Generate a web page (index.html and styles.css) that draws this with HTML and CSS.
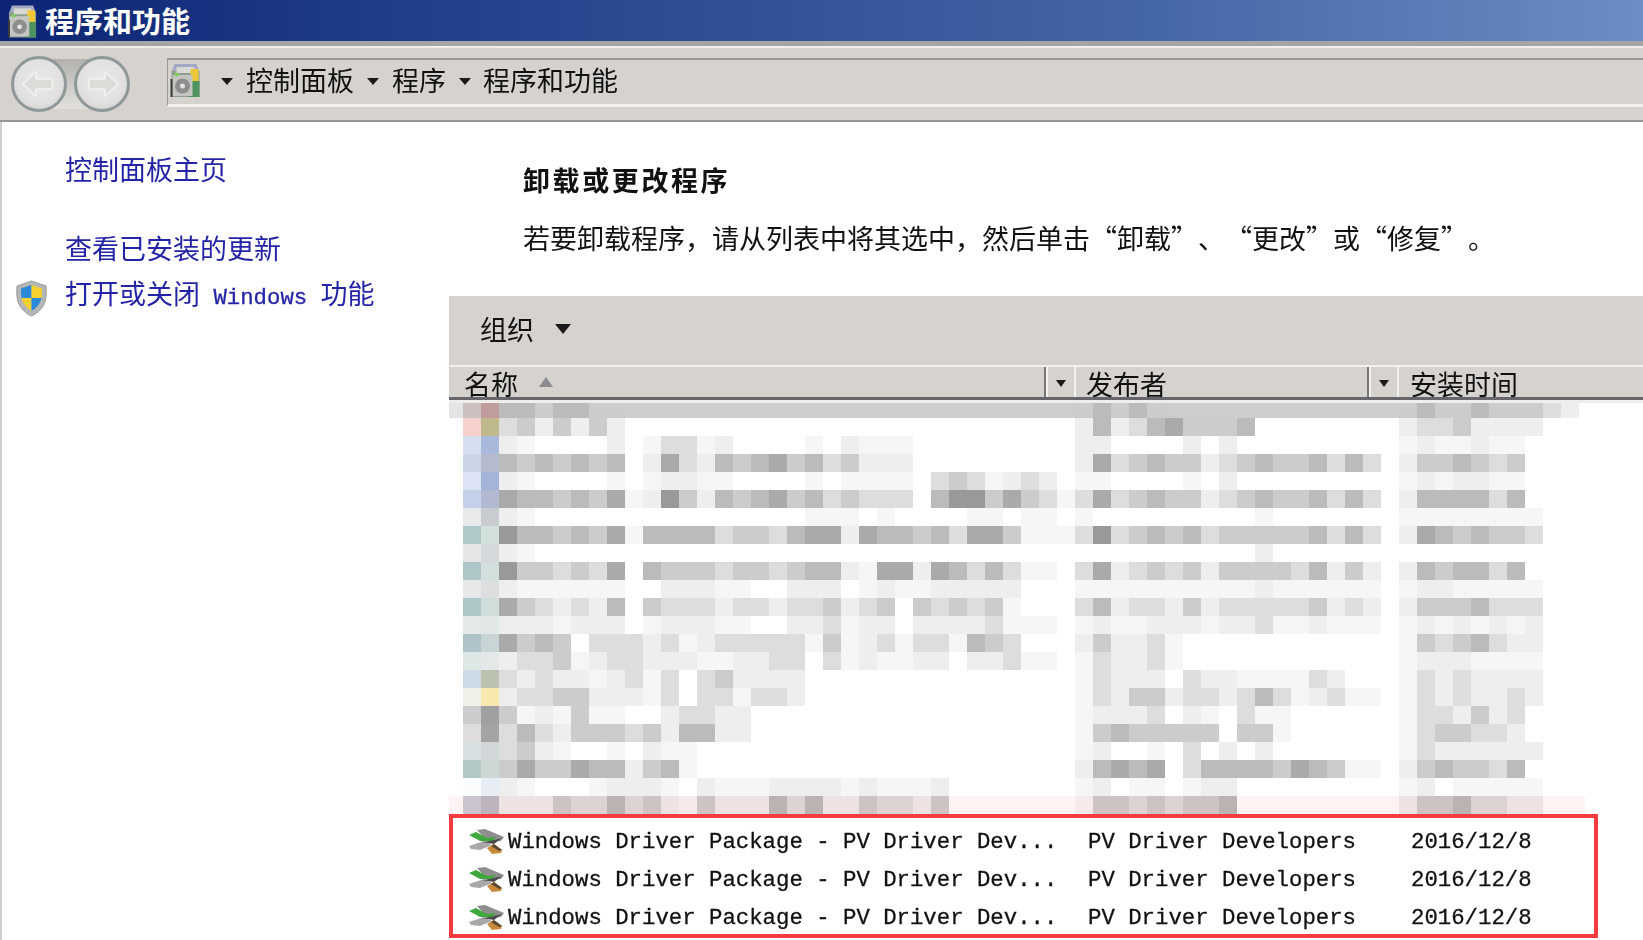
FILE: index.html
```html
<!DOCTYPE html>
<html lang="zh-CN">
<head>
    <meta charset="UTF-8">
    <title>程序和功能</title>
    <link rel="stylesheet" href="styles.css">
</head>
<body>
    <svg class="icon-defs" width="0" height="0">
        <symbol id="programs-icon" viewBox="0 0 32 36">
            <path d="M5 2h22l3 8H2z" fill="#a4a8c4"/>
            <rect x="2" y="9" width="28" height="26" fill="#8f9c90"/>
            <rect x="7" y="5" width="18" height="6" fill="#d8d8d4"/>
            <path d="M21 7h8v12h-8z" fill="#efc636"/>
            <rect x="19" y="19" width="11" height="16" fill="#4f9460"/>
            <rect x="3" y="13" width="20" height="21" fill="#c4c4c0"/>
            <circle cx="13" cy="24" r="7.500" fill="#8e8e8e"/>
            <circle cx="13" cy="24" r="2.500" fill="#e4e4e4"/>
            <rect x="1" y="17" width="2" height="18" fill="#3a3a3a"/>
            <rect x="5" y="11" width="4" height="3" fill="#7ed05a"/>
        </symbol>
        <symbol id="driver-icon" viewBox="0 0 36 26">
            <path d="M9 2l8-1 19 8-3 4-13 1z" fill="#8e8e8e"/>
            <path d="M1 7l7-3 11 6 9-1-4 4-12 0z" fill="#3fa83c"/>
            <path d="M1 18l15-5 8 4-12 5-9-1z" fill="#a8a8a8"/>
            <path d="M14 14l8-1 12-3-8 6z" fill="#4a4a4a"/>
            <path d="M19 20l7-4 8 6-1 3-9 1z" fill="#c98a3c"/>
            <path d="M26 16l8 6-3 1-8-5z" fill="#5c4a34"/>
        </symbol>
    </svg>

    <div class="window">
        <div class="titlebar">
            <svg class="window-icon"><use href="#programs-icon"/></svg>
            <span class="title">程序和功能</span>
        </div>

        <div class="toolbar">
            <svg class="nav-buttons" viewBox="0 0 120 56">
                <defs>
                    <radialGradient id="nav-fill" cx="50%" cy="45%" r="60%">
                        <stop offset="0%" stop-color="#ebeae8"/>
                        <stop offset="70%" stop-color="#e2e1df"/>
                        <stop offset="100%" stop-color="#cfcecb"/>
                    </radialGradient>
                    <linearGradient id="nav-bridge" x1="0" y1="0" x2="0" y2="1">
                        <stop offset="0%" stop-color="#b4b2ae"/>
                        <stop offset="100%" stop-color="#e2e1de"/>
                    </linearGradient>
                </defs>
                <rect x="26" y="3" width="68" height="50" fill="url(#nav-bridge)"/>
                <circle cx="28" cy="28" r="26.500" fill="url(#nav-fill)" stroke="#8f9898" stroke-width="3"/>
                <circle cx="91" cy="28" r="26.500" fill="url(#nav-fill)" stroke="#8f9898" stroke-width="3"/>
                <path d="M12 28l13-12v7h16v10H25v7z" fill="#dcdbd8" stroke="#f2f2f0" stroke-width="1.500"/>
                <path d="M107 28L94 16v7H78v10h16v7z" fill="#dcdbd8" stroke="#f2f2f0" stroke-width="1.500"/>
            </svg>
            <div class="breadcrumb">
                <svg class="crumb-icon"><use href="#programs-icon"/></svg>
                <span class="crumb-arrow"></span>
                <span class="crumb">控制面板</span>
                <span class="crumb-arrow"></span>
                <span class="crumb">程序</span>
                <span class="crumb-arrow"></span>
                <span class="crumb">程序和功能</span>
            </div>
        </div>

        <div class="content">
            <div class="sidebar">
                <div class="task task-home">
                    <span class="task-slot"></span>
                    <a class="task-link">控制面板主页</a>
                </div>
                <div class="task task-updates">
                    <span class="task-slot"></span>
                    <a class="task-link">查看已安装的更新</a>
                </div>
                <div class="task">
                    <span class="task-slot">
                        <svg class="shield" viewBox="0 0 33 37">
                            <path d="M16.500 1L31 6c1 12 0 23-14.500 30C2 29 1 18 2 6z" fill="#b4b6b8" stroke="#9a9c9e"/>
                            <path d="M16.500 5L6 8.500c0 3 0 6 .5 9.500h10z" fill="#2a8ad8"/>
                            <path d="M16.500 5L27 8.500c0 3 0 6-.5 9.500h-10z" fill="#f6d02e"/>
                            <path d="M6.500 18c1 5 5 10 10 13V18z" fill="#f6d02e"/>
                            <path d="M26.500 18c-1 5-5 10-10 13V18z" fill="#2a8ad8"/>
                        </svg>
                    </span>
                    <a class="task-link">打开或关闭<span class="latin"> Windows </span>功能</a>
                </div>
            </div>

            <div class="main">
                <h1 class="heading">卸载或更改程序</h1>
                <p class="hint">若要卸载程序，请从列表中将其选中，然后单击“卸载”、“更改”或“修复”。</p>

                <div class="list-toolbar">
                    <span>组织</span>
                    <span class="organize-arrow"></span>
                </div>

                <div class="list-header">
                    <div class="column column-name">
                        <span class="column-title">名称</span>
                        <span class="sort-arrow"></span>
                    </div>
                    <div class="column-menu"><span class="menu-arrow"></span></div>
                    <div class="column column-publisher">
                        <span class="column-title">发布者</span>
                    </div>
                    <div class="column-menu"><span class="menu-arrow"></span></div>
                    <div class="column column-date">
                        <span class="column-title">安装时间</span>
                    </div>
                </div>

                <canvas id="mosaic" class="mosaic" width="1136" height="411"></canvas>

                <div class="drivers">
                    <div class="driver-row">
                        <svg class="driver-icon"><use href="#driver-icon"/></svg>
                        <span class="driver-name">Windows Driver Package - PV Driver Dev...</span>
                        <span class="driver-publisher">PV Driver Developers</span>
                        <span>2016/12/8</span>
                    </div>
                    <div class="driver-row">
                        <svg class="driver-icon"><use href="#driver-icon"/></svg>
                        <span class="driver-name">Windows Driver Package - PV Driver Dev...</span>
                        <span class="driver-publisher">PV Driver Developers</span>
                        <span>2016/12/8</span>
                    </div>
                    <div class="driver-row">
                        <svg class="driver-icon"><use href="#driver-icon"/></svg>
                        <span class="driver-name">Windows Driver Package - PV Driver Dev...</span>
                        <span class="driver-publisher">PV Driver Developers</span>
                        <span>2016/12/8</span>
                    </div>
                </div>
            </div>
        </div>
    </div>

    <script src="mosaic.js"></script>
</body>
</html>
```

FILE: styles.css
```css
* {
    margin: 0;
    padding: 0;
    box-sizing: border-box;
    font-family: "Noto Sans CJK SC", "Liberation Mono", sans-serif;
}

:root {
    --panel-color: #d6d3ce;
    --line-color: #98989a;
    --link-color: #2424a8;
    --text-color: #111111;
}

body {
    background-color: #ffffff;
    color: var(--text-color);
    overflow: hidden;
}

.icon-defs {
    position: absolute;
}

/* the screenshot is an upscaled one, everything in it is a bit soft */
.window {
    width: 1643px;
    height: 940px;
    display: flex;
    flex-direction: column;
    overflow: hidden;
    filter: blur(0.6px);
}

.titlebar {
    height: 41px;
    flex-shrink: 0;
    display: flex;
    align-items: center;
    padding-left: 7px;
    gap: 7px;
    background: linear-gradient(90deg, #0c2473 0%, #1d3a86 20%, #4467a8 70%, #6c8cc4 100%);
}

.window-icon {
    width: 31px;
    height: 36px;
}

.title {
    margin-top: -2px;
    font-size: 29px;
    font-weight: 700;
    line-height: 36px;
    color: #ffffff;
}

.toolbar {
    height: 81px;
    flex-shrink: 0;
    display: flex;
    padding: 12px 0 0 11px;
    background-color: var(--panel-color);
    border-top: 5px solid #a5a5a5;
    border-bottom: 2px solid #96969a;
    box-shadow: inset 0 2px 0 #f0efec;
}

.nav-buttons {
    width: 120px;
    height: 56px;
    margin-top: -2px;
}

.breadcrumb {
    flex: 1;
    height: 49px;
    margin-left: 36px;
    display: flex;
    align-items: center;
    padding: 0 0 5px 1px;
    border-top: 2px solid var(--line-color);
    border-left: 1px solid var(--line-color);
    border-bottom: 3px solid #f1f0ec;
    font-size: 27px;
}

.crumb-icon {
    width: 33px;
    height: 36px;
}

.crumb-arrow {
    width: 0;
    height: 0;
    margin: 4px 13px 0 13px;
    border-left: 6px solid transparent;
    border-right: 6px solid transparent;
    border-top: 7px solid #1a1a1a;
}

.crumb-arrow:nth-child(2) {
    margin-left: 19px;
}

.crumb {
    line-height: 36px;
}

.crumb:last-child {
    margin-left: -1px;
}

.content {
    flex: 1;
    display: flex;
    min-height: 0;
}

.sidebar {
    width: 449px;
    flex-shrink: 0;
    padding: 29px 0 0 13px;
    border-left: 2px solid #cfcfcf;
    display: flex;
    flex-direction: column;
    gap: 11px;
}

.task {
    display: flex;
    align-items: center;
    height: 36px;
    font-size: 27px;
}

.task-updates {
    margin-top: 32px;
}

.task-slot {
    width: 50px;
    flex-shrink: 0;
    display: flex;
}

.shield {
    width: 33px;
    height: 37px;
    margin-top: 6px;
}

.task-link {
    color: var(--link-color);
    line-height: 36px;
    white-space: nowrap;
}

.latin {
    font-family: "Liberation Mono", monospace;
    font-size: 22.34px;
    -webkit-text-stroke: 0.3px;
}

.main {
    flex: 1;
    min-width: 0;
}

.heading {
    margin: 40px 0 0 74px;
    font-size: 27px;
    font-weight: 700;
    line-height: 36px;
    letter-spacing: 2.6px;
}

.hint {
    margin: 22px 0 0 74px;
    font-size: 27px;
    line-height: 36px;
    white-space: nowrap;
    text-spacing-trim: space-all;
}

.list-toolbar {
    height: 69px;
    margin-top: 40px;
    display: flex;
    align-items: center;
    gap: 21px;
    padding: 0 0 4px 31px;
    background-color: var(--panel-color);
    font-size: 27px;
}

.organize-arrow {
    width: 0;
    height: 0;
    border-left: 8px solid transparent;
    border-right: 8px solid transparent;
    border-top: 10px solid #1a1a1a;
}

.list-header {
    height: 35px;
    display: flex;
    overflow: hidden;
    margin-bottom: 3px;
    background-color: var(--panel-color);
    border-top: 2px solid #f2f1ee;
    border-bottom: 3px solid #66666a;
    font-size: 27px;
    box-shadow: 0 3px 0 #eeeeee;
}

.column {
    display: flex;
    height: 30px;
    line-height: 30px;
    border-right: 2px solid #77777a;
}

.column-title {
    margin-top: 2px;
    white-space: nowrap;
}

.column-name {
    width: 597px;
    padding-left: 15px;
}

.column-publisher {
    width: 295px;
    padding-left: 10px;
    border-left: 2px solid #f2f1ee;
}

.column-date {
    flex: 1;
    padding-left: 11px;
    border-left: 2px solid #f2f1ee;
    border-right: none;
}

.sort-arrow {
    width: 0;
    height: 0;
    margin: 10px 0 0 21px;
    border-left: 7px solid transparent;
    border-right: 7px solid transparent;
    border-bottom: 10px solid #8c8c90;
}

.column-menu {
    width: 28px;
    height: 30px;
    display: flex;
    align-items: center;
    justify-content: center;
    padding-top: 3px;
    border-left: 2px solid #f2f1ee;
}

.menu-arrow {
    width: 0;
    height: 0;
    border-left: 5px solid transparent;
    border-right: 5px solid transparent;
    border-top: 7px solid #1a1a1a;
}

.mosaic {
    display: block;
}

.drivers {
    width: 1149px;
    height: 124px;
    padding: 5px 0 0 15px;
    border: 4px solid #f43b40;
    font-family: "Liberation Mono", monospace;
    font-size: 22.34px;
    -webkit-text-stroke: 0.3px;
}

.driver-row {
    height: 38px;
    display: flex;
    align-items: center;
    white-space: nowrap;
}

.driver-row span {
    font-family: "Liberation Mono", monospace;
}

.driver-icon {
    width: 36px;
    height: 26px;
    margin-right: 4px;
    margin-top: -2px;
}

.driver-name {
    width: 580px;
}

.driver-publisher {
    width: 323px;
}
```

FILE: mosaic.js
```js
// pixelated rows of the program list: icon colours, then grey levels per tile.
// sections start at tile 2, 34 and 52, "f" is white and "g" is a very light tile
const TILE = 18;
const LEFT = 14;
const BAND_HEIGHT = 15;
const SECTION_START = [2, 34, 52];

const band = ["#ccc0c0", "#c09c9c", "bbcbbcc|cbcbc|cbccbcccde"];

const rows = [
    ["#f5d0cc", "#c0b98c", "dcecece|ebedbacccb|eddceeee"],
    ["#d5dff0", "#a9b9dc", "egffffefgddgeffffgfeggg|eeffffefe|geggegg"],
    ["#cbd5e8", "#b5bbcc", "bcbcbcbfeadebcbacbdceee|eadcbccedcbccbdbd|eccbcdc"],
    ["#dbe3f5", "#a4b4d8", "egffffgfgeeggffffgfggggfdcdgedef|ggffffgfe|gegeegg"],
    ["#c5d1ea", "#b3b9d0", "abbcbcage9cebcbacbdcdddfb99cacdg|dadcbccedcbccbdbd|ebbbbdb"],
    ["#e8e9ea", "#c8ccd0", "egfffffffffffffffgggfgffffggfgg|gfffffffffg|gggggggg"],
    ["#afc8ca", "#d3e1dd", "9bbcbcagbbbbdccdbaaeabbcbdaacggg|d9dcbcbdcccccbdbd|eabcbccd"],
    ["#e4e6e8", "#d5d9dc", "eg|ffffffffffe|ffffffff"],
    ["#aec6c8", "#d2dfdc", "9ccdcdafbcccdccdcbbegaaeabdbdggf|daedcdceccccdbece|ebcbbdb"],
    ["#e5e7e8", "#dcdee0", "eggggggffeeeggffeeefgeggeeeeefff|ggggggggggegggggg|geeggggg"],
    ["#adc7c9", "#d0dedb", "acdedebfcdddeddeddcedcfcdcdcg|dbeddecedddddcede|ecccbddd"],
    ["#e4eaea", "#e2e8e8", "eeegeeefgeeeggffeedgeefeeeedggg|geggeeegeedggeggg|gegegege"],
    ["#afc4c8", "#c8d4d5", "acbcfdddedgedddddgcgedgddgbcd|eceedg|gcdcbdee"],
    ["#dde7e5", "#e4e8e8", "eddcgeddeeeggeeddfdgeggeefeedgg|gdeedg|geeegggg"],
    ["#cddbe8", "#bbc3b0", "dedeegedgdfdceeee|gdeeefdeeggggde|gdedeeee"],
    ["#f0f0e8", "#f8e8b0", "eddcceeegdfddgdde|gdecceddedbdgedgg|gdedeede"],
    ["#cccccc", "#a0a0a0", "cgegcggffeddee|geeedfegfdgg|gddecedf"],
    ["#dddddd", "#a4a4a4", "dbdecccdcebbee|gcbcccccfccg|gdccdde"],
    ["#d8dfe2", "#d2d8da", "dcegffgfegg|geffgfdfefe|gdeeeeee"],
    ["#b2c8c6", "#cdd8d4", "caccabbecbg|ebabafdbbbbcabcgg|ecbccdb"],
    ["#fafcfd", "#e8ecf4", "egfffgeeegfegggeeeegeggge|gefggfgee|gefggggg"],
    ["#cccdd8", "#bdbcc8", "eeecddbdcegceeebdbeecddec|gccdcdccb|eccbddee"]
];

const ctx = document.getElementById("mosaic").getContext("2d");

function grey(ch) {
    const level = ch === "g" ? 246 : parseInt(ch, 16) * 17;
    return `rgb(${level},${level},${level})`;
}

function drawRow(row, y, height) {
    ctx.fillStyle = row[0];
    ctx.fillRect(LEFT, y, TILE, height);
    ctx.fillStyle = row[1];
    ctx.fillRect(LEFT + TILE, y, TILE, height);

    row[2].split("|").forEach((section, i) => {
        [...section].forEach((ch, j) => {
            if (ch === "f") return;
            ctx.fillStyle = grey(ch);
            ctx.fillRect(LEFT + (SECTION_START[i] + j) * TILE, y, TILE, height);
        });
    });
}

// grey band right under the header
ctx.fillStyle = "#cdcdcd";
ctx.fillRect(0, 0, 1100, BAND_HEIGHT);
ctx.fillStyle = "#e4e4e4";
ctx.fillRect(0, 0, LEFT, BAND_HEIGHT);
drawRow(band, 0, BAND_HEIGHT);

rows.forEach((row, i) => drawRow(row, BAND_HEIGHT + i * TILE, TILE));

// the last row picks up some red from the box below it
ctx.globalCompositeOperation = "multiply";
ctx.fillStyle = "#fff4f3";
ctx.fillRect(0, BAND_HEIGHT + 21 * TILE, 1136, TILE);
```
